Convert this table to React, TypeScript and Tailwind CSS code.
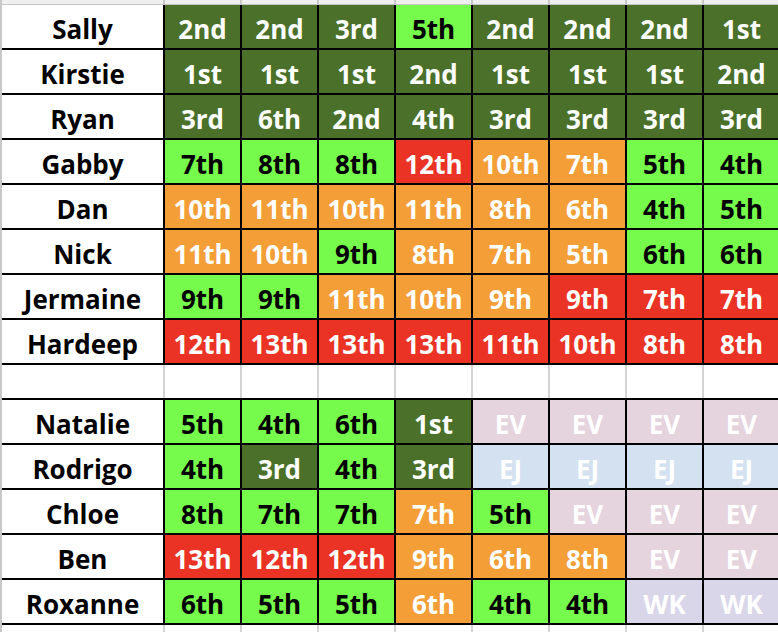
const fills: Record<string, string> = {
  D: "bg-[#4a7029] text-white",
  L: "bg-[#76fa4b] text-black",
  O: "bg-[#f49e37] text-white",
  R: "bg-[#ea3324] text-white",
  P: "bg-[#e5d3de] text-white",
  B: "bg-[#d3e1f0] text-white",
  V: "bg-[#d9d6e9] text-white",
};

const top = [
  ["Sally", "2nd D", "2nd D", "3rd D", "5th L", "2nd D", "2nd D", "2nd D", "1st D"],
  ["Kirstie", "1st D", "1st D", "1st D", "2nd D", "1st D", "1st D", "1st D", "2nd D"],
  ["Ryan", "3rd D", "6th D", "2nd D", "4th D", "3rd D", "3rd D", "3rd D", "3rd D"],
  ["Gabby", "7th L", "8th L", "8th L", "12th R", "10th O", "7th O", "5th L", "4th L"],
  ["Dan", "10th O", "11th O", "10th O", "11th O", "8th O", "6th O", "4th L", "5th L"],
  ["Nick", "11th O", "10th O", "9th L", "8th O", "7th O", "5th O", "6th L", "6th L"],
  ["Jermaine", "9th L", "9th L", "11th O", "10th O", "9th O", "9th R", "7th R", "7th R"],
  ["Hardeep", "12th R", "13th R", "13th R", "13th R", "11th R", "10th R", "8th R", "8th R"],
];

const bottom = [
  ["Natalie", "5th L", "4th L", "6th L", "1st D", "EV P", "EV P", "EV P", "EV P"],
  ["Rodrigo", "4th L", "3rd D", "4th L", "3rd D", "EJ B", "EJ B", "EJ B", "EJ B"],
  ["Chloe", "8th L", "7th L", "7th L", "7th O", "5th L", "EV P", "EV P", "EV P"],
  ["Ben", "13th R", "12th R", "12th R", "9th O", "6th O", "8th O", "EV P", "EV P"],
  ["Roxanne", "6th L", "5th L", "5th L", "6th O", "4th L", "4th L", "WK V", "WK V"],
];

const cols = "grid grid-cols-[163px_repeat(8,77px)]";

function Row({ row }: { row: string[] }) {
  const [name, ...cells] = row;
  return (
    <div className={`${cols} grid-rows-[45px] h-[45px] leading-[35px]`}>
      <div className="flex items-center justify-center pt-[6px] border-b-2 border-black ml-[2px]">{name}</div>
      {cells.map((c, i) => {
        const [text, k] = c.split(" ");
        return (
          <div
            key={i}
            className={`flex items-center justify-center pt-[6px] border-l-2 border-b-2 border-black ${fills[k]}`}
          >
            {text}
          </div>
        );
      })}
    </div>
  );
}

function Blank({ h }: { h: string }) {
  return (
    <div className={`${cols} ${h}`}>
      <div />
      {Array.from({ length: 8 }).map((_, i) => (
        <div key={i} className="border-l-2 border-[#d4d4d4]" />
      ))}
    </div>
  );
}

export default function App() {
  return (
    <div
      className="w-[778px] h-[632px] overflow-hidden bg-white text-[26px] font-bold text-black relative border-l-2 border-[#c8c8c8]"
      style={{ fontFamily: '"Open Sans", sans-serif' }}
    >
      <div className={`${cols} h-[5px] -ml-[2px]`}>
        <div className="bg-[#efefef] border-b border-[#c6c6c6]" />
        {Array.from({ length: 8 }).map((_, i) => (
          <div key={i} className="bg-[#efefef] border-b border-[#c6c6c6] border-l-2 border-l-[#c8c8c8]" />
        ))}
      </div>
      <div className="-ml-[2px]">
        {top.map((r) => (
          <Row key={r[0]} row={r} />
        ))}
        <Blank h="h-[33px]" />
        <div className={`${cols} h-[2px]`}>
          <div className="bg-black ml-[2px]" />
          {Array.from({ length: 8 }).map((_, i) => (
            <div key={i} className="bg-black" />
          ))}
        </div>
        {bottom.map((r) => (
          <Row key={r[0]} row={r} />
        ))}
        <Blank h="h-[20px]" />
      </div>
    </div>
  );
}
